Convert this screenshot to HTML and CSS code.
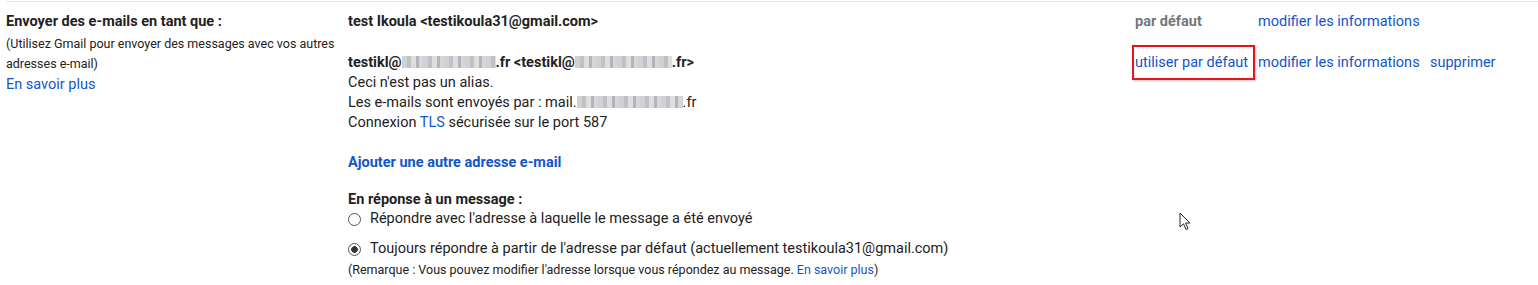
FILE: index.html
```html
<!DOCTYPE html>
<html lang="fr">
<head>
    <meta charset="UTF-8">
    <title>Paramètres - Comptes</title>
    <link rel="stylesheet" href="styles.css">
</head>
<body>
    <div class="setting">
        <!-- left label column -->
        <div class="label">
            <div class="label-title">Envoyer des e-mails en tant que :</div>
            <div class="label-hint">(Utilisez Gmail pour envoyer des messages avec vos autres adresses e-mail)</div>
            <a class="link more" href="#">En savoir plus</a>
        </div>

        <div class="value">
            <div class="accounts">
                <div class="acc-name"><b>test Ikoula &lt;testikoula31@gmail.com&gt;</b></div>
                <div class="acc-status">par défaut</div>
                <div class="acc-edit"><a class="link" href="#">modifier les informations</a></div>
                <div class="acc-del"></div>

                <div class="acc-name">
                    <b>testikl@<span class="blur w96"></span>.fr &lt;testikl@<span class="blur w98"></span>.fr&gt;</b><br>
                    Ceci n'est pas un alias.<br>
                    Les e-mails sont envoyés par : mail.<span class="blur w106"></span>.fr<br>
                    Connexion <a class="link" href="#">TLS</a> sécurisée sur le port 587
                </div>
                <div class="acc-status"><a class="link highlight" href="#">utiliser par défaut</a></div>
                <div class="acc-edit"><a class="link" href="#">modifier les informations</a></div>
                <div class="acc-del"><a class="link" href="#">supprimer</a></div>
            </div>

            <a class="link add" href="#">Ajouter une autre adresse e-mail</a>

            <div class="reply">
                <div class="reply-title">En réponse à un message :</div>
                <label class="radio"><input type="radio" name="reply"> Répondre avec l'adresse à laquelle le message a été envoyé</label>
                <label class="radio second"><input type="radio" name="reply" checked> Toujours répondre à partir de l'adresse par défaut (actuellement testikoula31@gmail.com)</label>
                <div class="note">(Remarque : Vous pouvez modifier l'adresse lorsque vous répondez au message. <a class="link" href="#">En savoir plus</a>)</div>
            </div>
        </div>
    </div>

    <svg class="cursor" width="13" height="20" viewBox="0 0 13 20">
        <path d="M1 1 L1 15 L4.5 11.8 L7 17.5 L9 16.6 L6.6 11 L11 11 Z" fill="#fff" stroke="#222" stroke-width="1"/>
    </svg>
</body>
</html>
```

FILE: styles.css
```css
body {
    margin: 0;
    padding: 0;
    background: #fff;
    font-family: Roboto, Arial, sans-serif;
    font-size: 14.5px;
    color: #222;
}

.setting {
    display: flex;
    margin: 1px 0 0 6px;
    padding-top: 10px;
    border-top: 1px solid #e5e5e5;
    line-height: 20px;
}

.link {
    color: #15c;
    text-decoration: none;
}

.label {
    width: 342px;
    flex-shrink: 0;
}

.label-title {
    font-weight: bold;
}

.label-hint {
    font-size: 12.5px;
    margin-top: 2px;
}

.more {
    display: block;
    margin-top: 1px;
}

.value {
    flex: 1;
}

.accounts {
    display: grid;
    grid-template-columns: 787px 123px 172px auto;
    row-gap: 21px;
}

.acc-status {
    color: #777;
    font-weight: bold;
}

.acc-status .link {
    font-weight: normal;
}

.highlight {
    position: relative;
}

.highlight::after {
    content: "";
    position: absolute;
    left: -3px;
    top: -9px;
    width: 119px;
    height: 31px;
    border: 2px solid #e8141c;
    box-shadow: 1px 1px 2px rgba(0, 0, 0, 0.25);
}

.blur {
    display: inline-block;
    height: 12px;
    vertical-align: -1px;
    background: repeating-linear-gradient(90deg, #c9c9cd 0 5px, #b3b6bc 5px 9px, #d8d8da 9px 14px, #a4a7ae 14px 17px, #cfcfd2 17px 21px);
    opacity: 0.85;
}

.w96 { width: 94px; }
.w98 { width: 97px; }
.w106 { width: 106px; }

.add {
    display: block;
    font-weight: bold;
    margin-top: 20px;
}

.reply {
    margin-top: 17px;
}

.reply-title {
    font-weight: bold;
    line-height: 19px;
}

.radio {
    display: flex;
    align-items: center;
    gap: 9px;
    line-height: 20px;
}

.radio.second {
    margin-top: 10px;
}

.radio input {
    appearance: none;
    margin: 0;
    width: 13px;
    height: 13px;
    border: 1px solid #555;
    border-radius: 50%;
    background: #fff;
}

.radio input:checked {
    background: radial-gradient(circle, #333 0 3px, #fff 3.6px);
}

.note {
    font-size: 12.5px;
    line-height: 22px;
}

.cursor {
    position: absolute;
    left: 1179px;
    top: 212px;
}
```
